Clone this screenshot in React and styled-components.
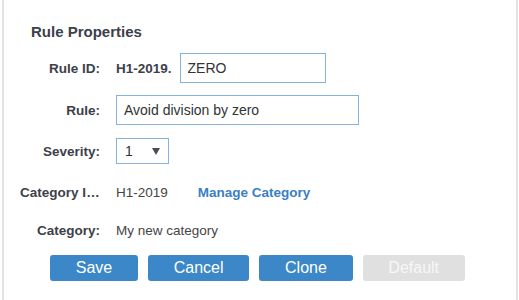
import { useState } from 'react';
import styled, { createGlobalStyle } from 'styled-components';

const GlobalStyle = createGlobalStyle`
  html, body {
    margin: 0;
    padding: 0;
    background: #fff;
    font-family: "Liberation Sans", Arial, sans-serif;
  }
`;

const Panel = styled.div`
  height: 300px;
  margin: 0 1px 0 2px;
  border-left: 2px solid #e3e3e3;
  border-right: 2px solid #e3e3e3;
  box-sizing: border-box;
  overflow: hidden;
`;

const Title = styled.h2`
  margin: 0;
  padding: 23px 0 0 27px;
  font-size: 15px;
  line-height: 18px;
  font-weight: 700;
  color: #3b404b;
`;

const Form = styled.div`
  padding-top: 6px;
`;

const Row = styled.div`
  display: flex;
  align-items: center;
  height: ${(p) => p.$h}px;
  padding-left: 16.1px;
`;

// narrow column: long labels get cut with an ellipsis
const Label = styled.div`
  width: 79.9px;
  margin-right: 16px;
  flex: none;
  font-size: 13.5px;
  font-weight: 700;
  color: #3d4049;
  text-align: right;
  white-space: nowrap;
  overflow: hidden;
  text-overflow: ellipsis;
`;

const Prefix = styled.span`
  font-size: 13.5px;
  font-weight: 700;
  color: #3d4049;
  margin-right: 8px;
`;

const Value = styled.span`
  font-size: 13.5px;
  color: #454545;
`;

const Link = styled.a`
  margin-left: 30px;
  font-size: 13.5px;
  font-weight: 700;
  color: #3a7fc4;
  text-decoration: none;
  cursor: pointer;
`;

const TextInput = styled.input`
  box-sizing: border-box;
  width: ${(p) => p.$w}px;
  height: 30px;
  padding: 0 7px;
  border: 1px solid #86b3dc;
  border-radius: 0;
  outline: none;
  font-family: "Liberation Sans", Arial, sans-serif;
  font-size: 14px;
  color: #333;
`;

const SelectWrap = styled.div`
  position: relative;
  width: 53px;
  height: 26px;
`;

const Select = styled.select`
  box-sizing: border-box;
  width: 100%;
  height: 100%;
  padding: 0 0 0 8px;
  border: 1px solid #86b3dc;
  border-radius: 0;
  background: #fff;
  appearance: none;
  outline: none;
  font-family: "Liberation Sans", Arial, sans-serif;
  font-size: 14px;
  color: #333;
`;

const Arrow = styled.svg`
  position: absolute;
  right: 9px;
  top: 10px;
  pointer-events: none;
`;

const Buttons = styled.div`
  display: flex;
  gap: 10px;
  padding: 8px 0 0 46px;
`;

const Button = styled.button`
  height: 26px;
  padding: 0 25.75px;
  border: none;
  border-radius: 3px;
  background: ${(p) => (p.disabled ? '#e0e0e0' : '#3b87c8')};
  color: ${(p) => (p.disabled ? '#f7f7f7' : '#fff')};
  font-family: "Liberation Sans", Arial, sans-serif;
  font-size: 16px;
  line-height: 26px;
  cursor: ${(p) => (p.disabled ? 'default' : 'pointer')};
`;

function App() {
  const [ruleId, setRuleId] = useState('ZERO');
  const [rule, setRule] = useState('Avoid division by zero');
  const [severity, setSeverity] = useState('1');

  return (
    <>
      <GlobalStyle />
      <Panel>
        <Title>Rule Properties</Title>
        <Form>
          <Row $h={42}>
            <Label>Rule ID:</Label>
            <Prefix>H1-2019.</Prefix>
            <TextInput $w={146} value={ruleId} onChange={(e) => setRuleId(e.target.value)} />
          </Row>
          <Row $h={42}>
            <Label>Rule:</Label>
            <TextInput $w={243} value={rule} onChange={(e) => setRule(e.target.value)} />
          </Row>
          <Row $h={40}>
            <Label>Severity:</Label>
            <SelectWrap>
              <Select value={severity} onChange={(e) => setSeverity(e.target.value)}>
                <option value="1">1</option>
                <option value="2">2</option>
                <option value="3">3</option>
              </Select>
              <Arrow width="8" height="7" viewBox="0 0 8 7">
                <path d="M0 0 H8 L4 7 Z" fill="#4a4f57" />
              </Arrow>
            </SelectWrap>
          </Row>
          <Row $h={42}>
            <Label title="Category ID:">Category ID:</Label>
            <Value>H1-2019</Value>
            <Link>Manage Category</Link>
          </Row>
          <Row $h={34}>
            <Label>Category:</Label>
            <Value>My new category</Value>
          </Row>
        </Form>
        <Buttons>
          <Button>Save</Button>
          <Button>Cancel</Button>
          <Button>Clone</Button>
          <Button disabled>Default</Button>
        </Buttons>
      </Panel>
    </>
  );
}

export default App;
